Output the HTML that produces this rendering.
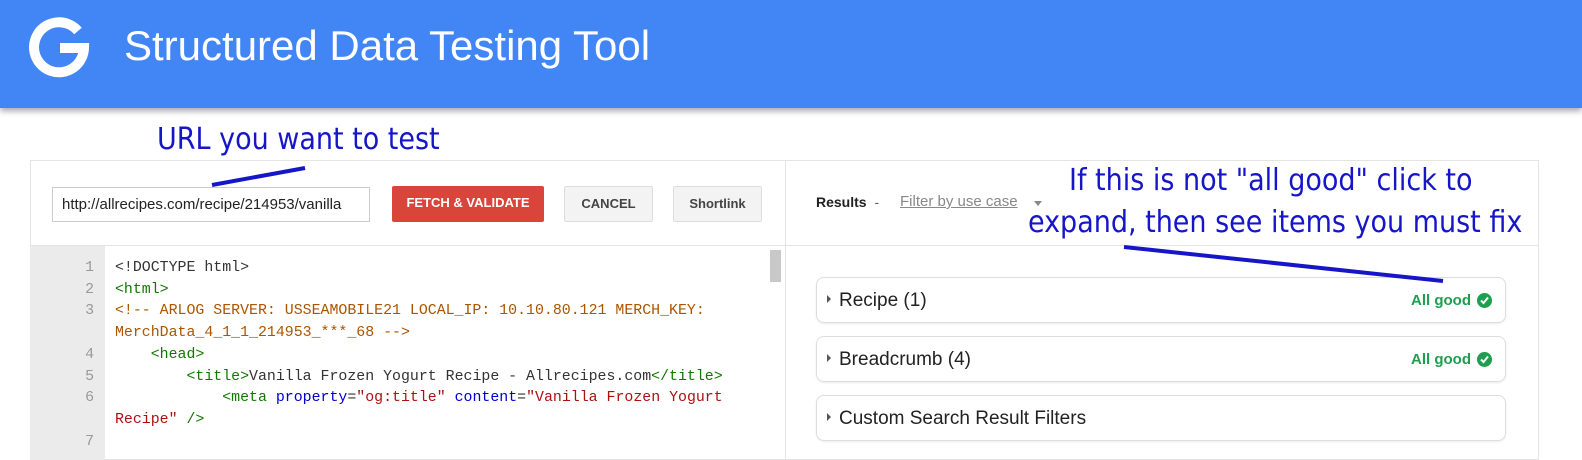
<!DOCTYPE html>
<html><head><style>
body{margin:0;width:1582px;height:460px;overflow:hidden;background:#fff;font-family:"Liberation Sans",sans-serif;position:relative}
.hdr{position:absolute;left:0;top:0;width:1582px;height:108px;background:#4285f4;box-shadow:0 3px 6px rgba(0,0,0,.35)}
.hdr .t{position:absolute;left:124px;top:22px;color:#fff;font-size:42px}
.ann{position:absolute;color:#1616c8;font-family:"DejaVu Sans Condensed","Liberation Sans",sans-serif;font-size:30px;white-space:nowrap}
.panel{position:absolute;top:160px;border:1px solid #e4e4e4;box-sizing:border-box}
.inp{position:absolute;left:52px;top:187px;width:318px;height:35px;border:1px solid #ccc;box-sizing:border-box;font-size:15px;padding:8px 9px;overflow:hidden;white-space:nowrap;color:#222}
.btn{position:absolute;top:186px;height:36px;box-sizing:border-box;font-size:13px;font-weight:bold;text-align:center;line-height:34px;border-radius:2px}
.code{position:absolute;left:30px;top:246px;width:755px;height:214px;font-family:"Liberation Mono",monospace;font-size:14.9px}
.gut{position:absolute;left:0;top:0;width:75px;height:214px;background:#ebebeb}
.ln{position:absolute;left:0;width:64px;text-align:right;color:#999}
.cl{position:absolute;left:85px;white-space:pre;color:#333}
.g{color:#170}.c{color:#a50}.b{color:#00c}.r{color:#a11}
.card{position:absolute;left:816px;width:690px;height:46px;border:1px solid #ddd;border-radius:8px;box-sizing:border-box;box-shadow:0 1px 2px rgba(0,0,0,.08)}
.card .n{position:absolute;left:22px;top:12px;font-size:19px;color:#222}
.card .tri{position:absolute;left:10px;top:17px;width:0;height:0;border-left:4px solid #555;border-top:4px solid transparent;border-bottom:4px solid transparent}
.ok{position:absolute;right:34px;top:14px;color:#1e9e4e;font-weight:bold;font-size:15px}
.chk{position:absolute;right:13px;top:15px}
</style></head><body>
<div class="hdr">
<svg style="position:absolute;left:28px;top:16px" width="62" height="62" viewBox="0 0 62 62"><path d="M50 15 A25 25 0 1 0 56 32 L32 32" fill="none" stroke="#fff" stroke-width="10"/></svg>
<div class="t">Structured Data Testing Tool</div>
</div>
<div class="ann" style="left:157px;top:122px">URL you want to test</div>
<div class="ann" style="left:1069px;top:163px">If this is not "all good" click to</div>
<div class="ann" style="left:1028px;top:205px">expand, then see items you must fix</div>
<div class="panel" style="left:30px;width:756px;height:300px"></div>
<div class="panel" style="left:785px;width:754px;height:300px"></div>
<div style="position:absolute;left:30px;top:245px;width:1509px;height:1px;background:#e4e4e4"></div>
<div class="inp">http://allrecipes.com/recipe/214953/vanilla</div>
<div class="btn" style="left:392px;width:152px;background:#d9453a;color:#fff">FETCH &amp; VALIDATE</div>
<div class="btn" style="left:564px;width:89px;background:#f3f3f3;border:1px solid #ddd;color:#444">CANCEL</div>
<div class="btn" style="left:673px;width:89px;background:#f3f3f3;border:1px solid #ddd;color:#444">Shortlink</div>
<div class="code"><div class="gut"></div>
<div class="ln" style="top:14px">1</div><div class="cl" style="top:14px">&lt;!DOCTYPE html&gt;</div>
<div class="ln" style="top:36px">2</div><div class="cl g" style="top:36px">&lt;html&gt;</div>
<div class="ln" style="top:57px">3</div><div class="cl c" style="top:57px">&lt;!-- ARLOG SERVER: USSEAMOBILE21 LOCAL_IP: 10.10.80.121 MERCH_KEY:</div>
<div class="cl c" style="top:79px">MerchData_4_1_1_214953_***_68 --&gt;</div>
<div class="ln" style="top:101px">4</div><div class="cl g" style="top:101px">    &lt;head&gt;</div>
<div class="ln" style="top:123px">5</div><div class="cl" style="top:123px"><span class="g">        &lt;title&gt;</span>Vanilla Frozen Yogurt Recipe - Allrecipes.com<span class="g">&lt;/title&gt;</span></div>
<div class="ln" style="top:144px">6</div><div class="cl" style="top:144px"><span class="g">            &lt;meta </span><span class="b">property</span>=<span class="r">"og:title"</span> <span class="b">content</span>=<span class="r">"Vanilla Frozen Yogurt</span></div>
<div class="cl" style="top:166px"><span class="r">Recipe"</span> <span class="g">/&gt;</span></div>
<div class="ln" style="top:188px">7</div>
<div style="position:absolute;left:740px;top:4px;width:11px;height:32px;background:#c8c8c8"></div>
</div>
<div style="position:absolute;left:816px;top:194px;font-size:14px;font-weight:bold;color:#222">Results <span style="font-weight:normal;color:#666;margin-left:4px">-</span></div>
<div style="position:absolute;left:900px;top:193px;font-size:15px;color:#888;text-decoration:underline">Filter by use case</div>
<div style="position:absolute;left:1034px;top:201px;border-top:5px solid #888;border-left:4px solid transparent;border-right:4px solid transparent"></div>
<div class="card" style="top:277px"><div class="tri"></div><div class="n">Recipe (1)</div><div class="ok">All good</div><svg class="chk" width="15" height="15" viewBox="0 0 15 15"><circle cx="7.5" cy="7.5" r="7.5" fill="#1e9e4e"/><path d="M4 7.5 L6.5 10 L11 4.5" fill="none" stroke="#fff" stroke-width="2"/></svg></div>
<div class="card" style="top:336px"><div class="tri"></div><div class="n">Breadcrumb (4)</div><div class="ok">All good</div><svg class="chk" width="15" height="15" viewBox="0 0 15 15"><circle cx="7.5" cy="7.5" r="7.5" fill="#1e9e4e"/><path d="M4 7.5 L6.5 10 L11 4.5" fill="none" stroke="#fff" stroke-width="2"/></svg></div>
<div class="card" style="top:395px"><div class="tri"></div><div class="n">Custom Search Result Filters</div></div>
<svg style="position:absolute;left:0;top:0" width="1582" height="460"><line x1="212" y1="185" x2="305" y2="168" stroke="#1616c8" stroke-width="4"/><line x1="1124" y1="247" x2="1443" y2="281" stroke="#1616c8" stroke-width="4"/></svg>
</body></html>
